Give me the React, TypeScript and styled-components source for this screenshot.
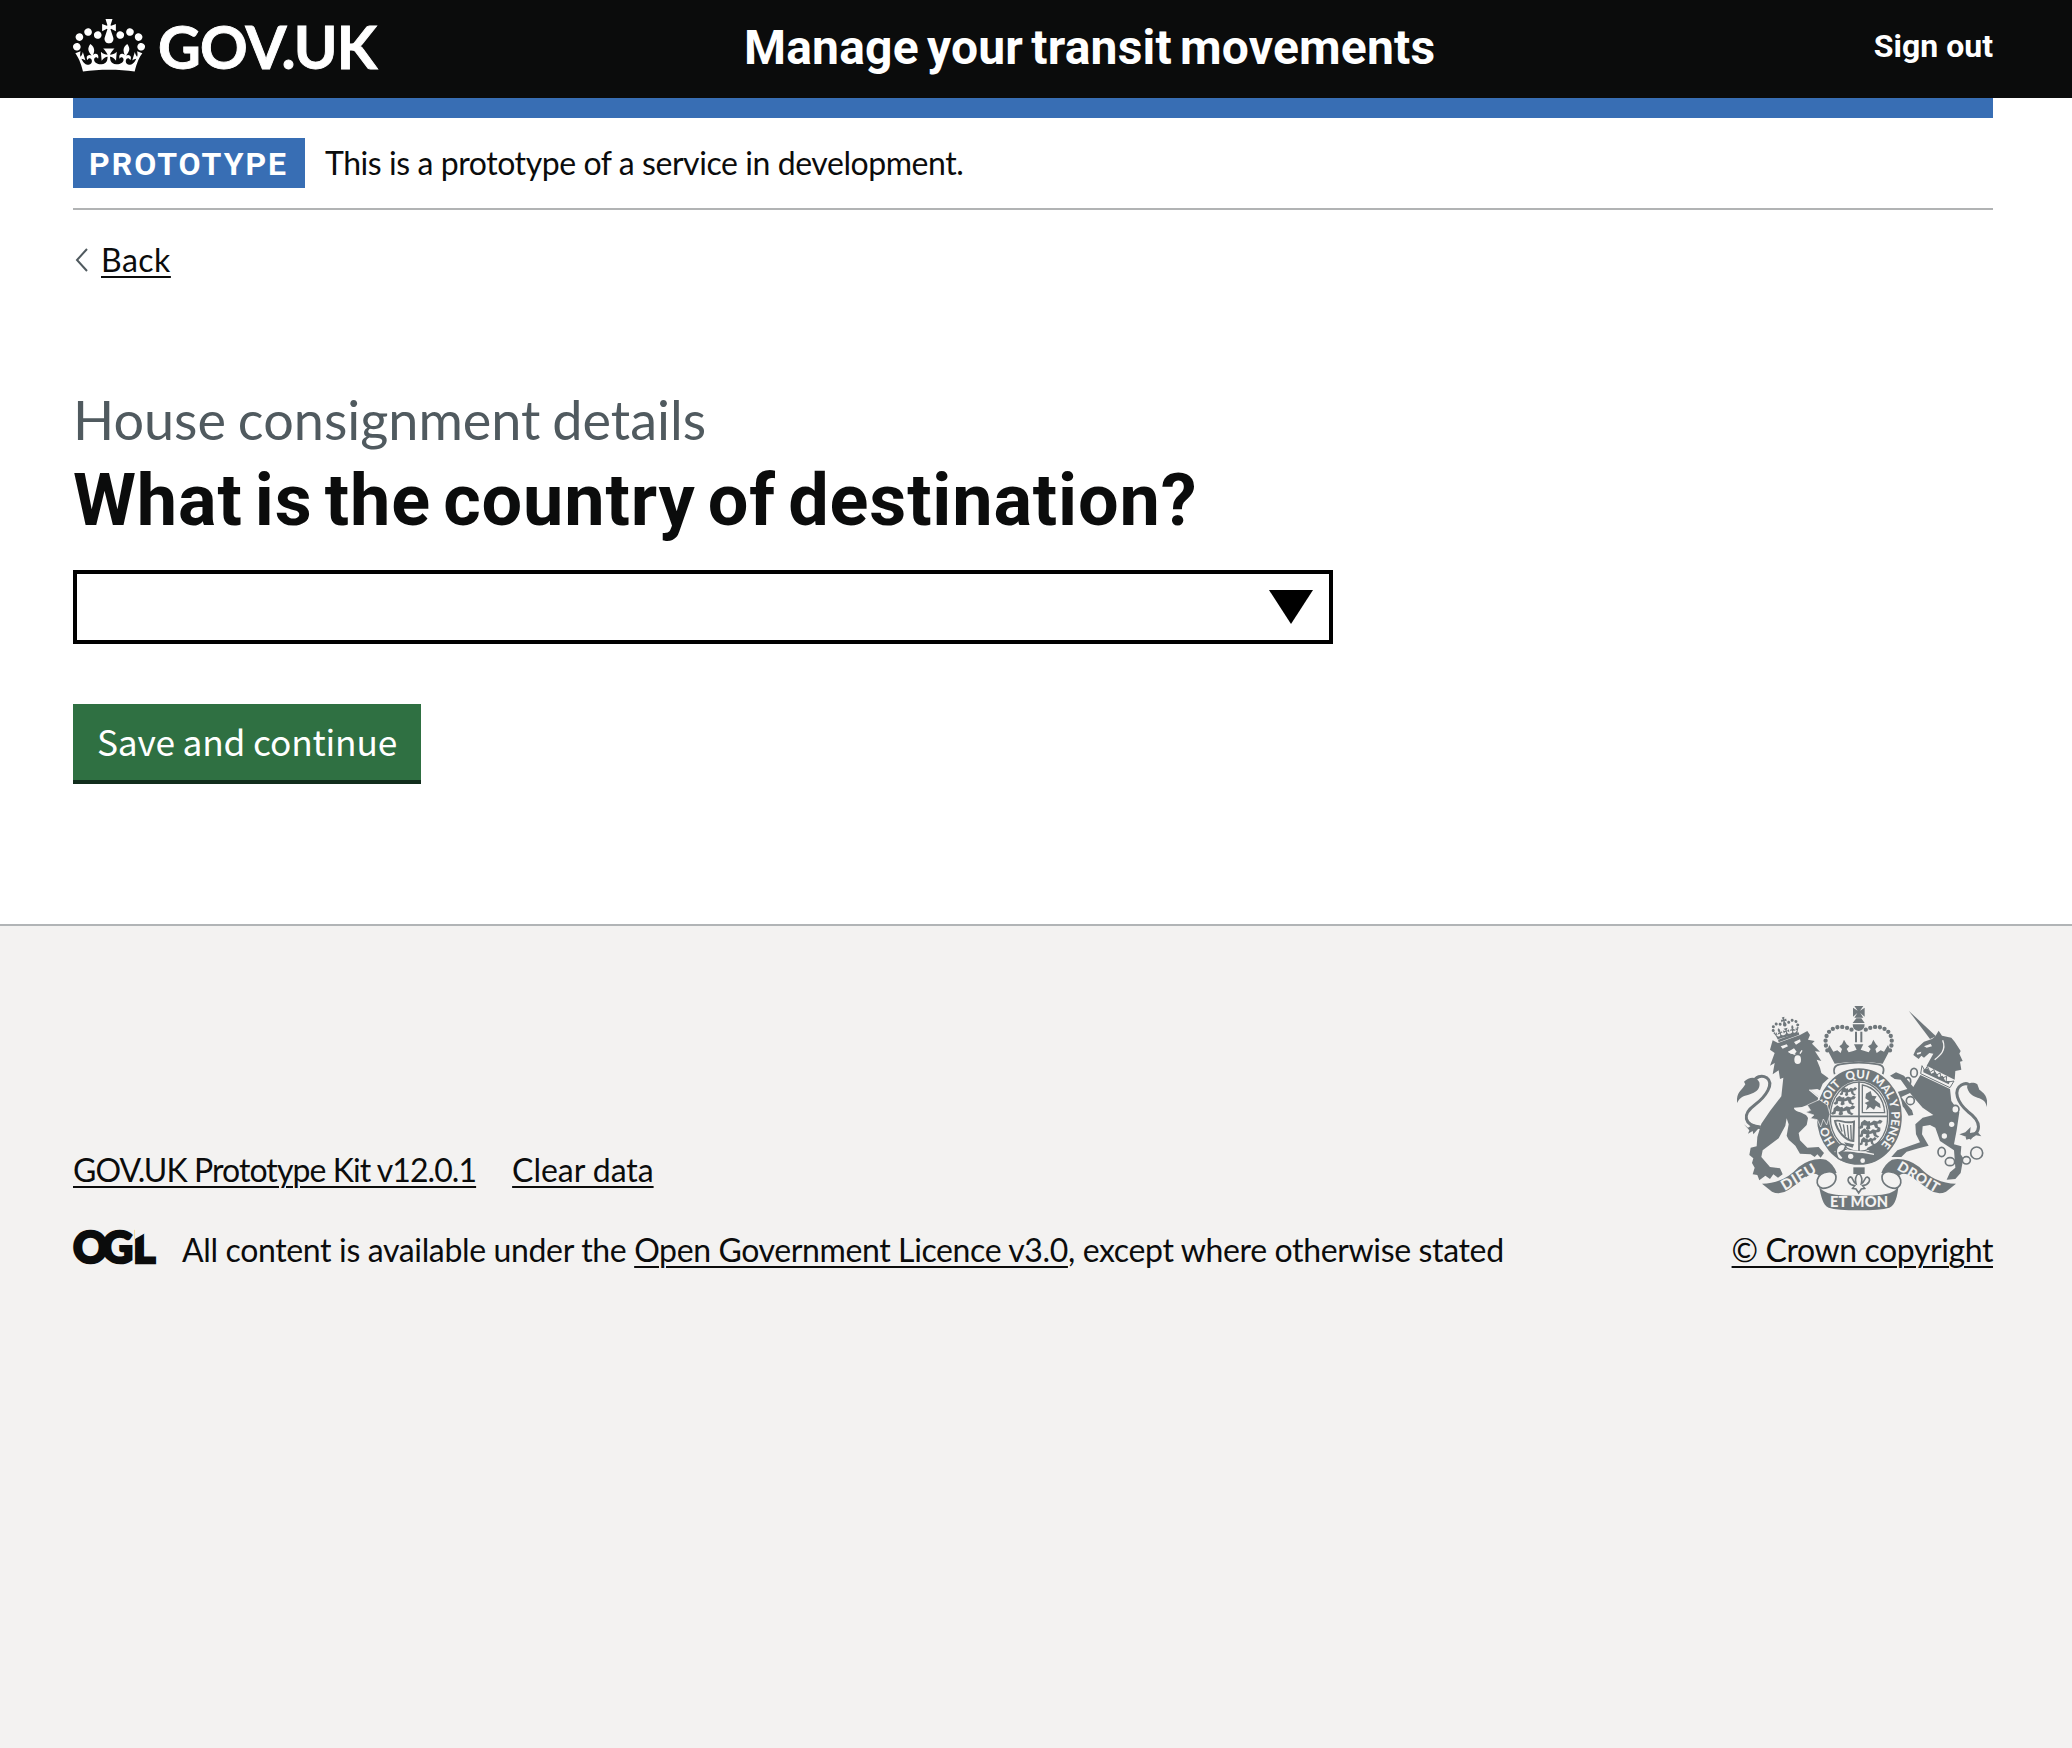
import React from "react";
import styled, { createGlobalStyle } from "styled-components";

const ink = "#0b0c0c";
const paper = "#f3f2f1";
const armsGrey = "#6f777b";
const light = 'Lato, "Noto Sans", sans-serif';
const bold = 'Roboto, "Noto Sans", sans-serif';

const GlobalStyle = createGlobalStyle`
  *, *::before, *::after { box-sizing: border-box; }
  html { background: ${paper}; }
  body { margin: 0; color: ${ink}; font-family: ${light}; font-size: 32px; line-height: 40px; }
`;

const Page = styled.div`
  display: flex;
  flex-direction: column;
  min-height: 1748px;
  background: #fff;
`;

const Container = styled.div`
  padding: 0 79px 0 73px;
`;

const Header = styled.header`
  height: 98px;
  padding: 0 79px 0 73px;
  background: ${ink};
  color: #fff;
  display: flex;
  align-items: flex-start;
`;

const LogoLink = styled.a`
  display: flex;
  align-items: flex-start;
  width: 671px;
  padding-top: 19px;
  color: #fff;
  text-decoration: none;
`;

const Crown = styled.svg`
  display: block;
  width: 72px;
  height: 53px;
  fill: #fff;
`;

const Wordmark = styled.span`
  margin: -2px 0 0 13px;
  font: 700 59px/60px ${light};
  letter-spacing: -0.8px;
  -webkit-text-stroke: 0.9px #fff;
`;

const ServiceName = styled.span`
  flex: 1;
  padding-top: 18px;
  font: 700 48px/60px ${bold};
  letter-spacing: 0.2px;
  word-spacing: -4px;
`;

const SignOut = styled.a`
  padding-top: 26px;
  font: 700 32px/40px ${bold};
  color: #fff;
  text-decoration: none;
`;

const BlueBar = styled.div`
  height: 20px;
  background: #386eb4;
`;

const PhaseBanner = styled.div`
  display: flex;
  align-items: center;
  gap: 20px;
  padding: 20px 0;
  border-bottom: 2px solid #b1b3b4;
`;

const Tag = styled.strong`
  width: 232px;
  height: 50px;
  padding: 1px 0 0 16px;
  background: #386eb4;
  color: #fff;
  font: 700 32px/50px ${bold};
  letter-spacing: 2px;
`;

const Text = styled.span<{ $track?: number }>`
  white-space: nowrap;
  letter-spacing: ${(p) => p.$track ?? -0.38}px;
`;

const PhaseText = styled(Text)`
  padding-bottom: 1px;
`;

const Link = styled.a<{ $track?: number }>`
  color: ${ink};
  white-space: nowrap;
  letter-spacing: ${(p) => p.$track ?? -0.38}px;
  text-decoration: underline;
  text-decoration-thickness: 2px;
  text-underline-offset: 4px;
`;

const BackRow = styled.nav`
  display: flex;
  align-items: center;
  gap: 13px;
  margin-top: 30px;
  padding-left: 2px;
`;

const Chevron = styled.svg`
  display: block;
  width: 13px;
  height: 24px;
  fill: none;
  stroke: #505a5f;
  stroke-width: 2;
`;

const Main = styled.main`
  padding: 110px 0 140px;
`;

const Caption = styled.span`
  display: block;
  margin-bottom: 11px;
  color: #505a5f;
  font: 400 54px/60px ${light};
  letter-spacing: 0;
  word-spacing: -2px;
`;

const Heading = styled.h1`
  margin: 0 0 29px;
  font: 700 72px/80px ${bold};
  letter-spacing: 0.85px;
  word-spacing: -6.5px;
`;

const Combo = styled.div`
  display: flex;
  align-items: flex-start;
  justify-content: flex-end;
  width: 1260px;
  height: 74px;
  padding: 16px 16px 0;
  border: 4px solid #000;
  background: #fff;
`;

const Arrow = styled.svg`
  display: block;
  width: 44px;
  height: 34px;
`;

const SaveButton = styled.button`
  display: block;
  width: 348px;
  height: 80px;
  margin-top: 60px;
  padding: 0 0 2px;
  border: 0;
  border-bottom: 4px solid #112d1c;
  background: #2f7042;
  color: #fff;
  font: 400 35.3px/70px "Noto Sans CJK JP", "Noto Sans", sans-serif;
  white-space: nowrap;
  letter-spacing: -0.2px;
`;

const Footer = styled.footer`
  flex: 1;
  display: flex;
  justify-content: space-between;
  align-items: flex-start;
  padding: 80px 79px 0 73px;
  border-top: 2px solid #b1b4b6;
  background: ${paper};
`;

const FooterMeta = styled.div`
  display: flex;
  flex-direction: column;
  gap: 40px;
  padding-top: 144px;
`;

const FooterLinks = styled.div`
  display: flex;
  gap: 36px;
`;

const Licence = styled.div`
  display: flex;
  align-items: flex-start;
  gap: 26px;
`;

const Ogl = styled.svg`
  display: block;
  width: 83px;
  height: 40px;
  overflow: visible;
`;

const Copyright = styled.div`
  display: flex;
  flex-direction: column;
  align-items: flex-end;
`;

const Arms = styled.svg`
  display: block;
  width: 250px;
  height: 205px;
  margin-right: 6px;
  margin-bottom: 19px;
`;

const crownPath =
  "M25 30.2c3.5 1.5 7.7-.2 9.1-3.7 1.5-3.6-.2-7.8-3.9-9.2-3.6-1.4-7.6.3-9.1 3.9-1.4 3.5.3 7.5 3.9 9zM9 39.5c3.6 1.5 7.8-.2 9.2-3.7 1.5-3.6-.2-7.8-3.9-9.1-3.6-1.5-7.6.2-9.1 3.8-1.4 3.5.3 7.5 3.8 9zM4.4 57.2c3.5 1.5 7.7-.2 9.1-3.8 1.5-3.6-.2-7.7-3.9-9.1-3.5-1.5-7.6.3-9.1 3.8-1.4 3.5.3 7.6 3.9 9.1zm38.3-21.4c3.5 1.5 7.7-.2 9.1-3.8 1.5-3.6-.2-7.7-3.9-9.1-3.6-1.5-7.6.3-9.1 3.8-1.3 3.6.4 7.7 3.9 9.1zm64.4-5.6c-3.6 1.5-7.8-.2-9.1-3.7-1.5-3.6.2-7.8 3.8-9.2 3.6-1.4 7.7.3 9.2 3.9 1.3 3.5-.4 7.5-3.9 9zm15.9 9.3c-3.6 1.5-7.7-.2-9.1-3.7-1.5-3.6.2-7.8 3.7-9.1 3.6-1.5 7.7.2 9.2 3.8 1.5 3.5-.3 7.5-3.8 9zm4.7 17.7c-3.6 1.5-7.8-.2-9.2-3.8-1.5-3.6.2-7.7 3.9-9.1 3.6-1.5 7.7.3 9.2 3.8 1.3 3.5-.4 7.6-3.9 9.1zM89.3 35.8c-3.6 1.5-7.8-.2-9.2-3.8-1.4-3.6.2-7.7 3.9-9.1 3.6-1.5 7.7.3 9.2 3.8 1.4 3.6-.3 7.7-3.9 9.1zM69.7 17.7l8.9 4.7V9.3l-8.9 2.8c-.2-.3-.5-.6-.9-.9L72.4 0H59.6l3.5 11.2c-.3.3-.6.5-.9.9l-8.8-2.8v13.1l8.8-4.7c.3.3.6.7.9.9l-5 15.4v.1c-.2.8-.4 1.6-.4 2.4 0 4.1 3.1 7.5 7 8.1h.2c.3 0 .7.1 1 .1.4 0 .7 0 1-.1h.2c4-.6 7.1-4.1 7.1-8.1 0-.8-.1-1.7-.4-2.4V34l-5.1-15.4c.4-.2.7-.6 1-.9zM66 92.8c16.9 0 32.8 1.1 47.1 3.2 4-16.9 8.9-26.7 14-33.5l-9.6-3.4c1 4.9 1.1 7.2 0 10.2-1.5-1.4-3-4.3-4.2-8.7L108.6 76c2.8-2 5-3.2 7.5-3.3-4.4 9.4-10 11.9-13.6 11.2-4.3-.8-6.3-4.6-5.6-7.9 1-4.7 5.7-5.9 8-.5 4.3-8.7-3-11.4-7.6-8.8 7.1-7.2 7.9-13.5 2.1-21.1-8 6.1-8.1 12.3-4.5 20.8-4.7-5.4-12.1-2.5-9.5 6.2 3.4-5.2 7.9-2 7.2 3.1-.6 4.3-6.4 7.8-13.5 7.2-10.3-.9-10.9-8-11.2-13.8 2.5-.5 7.1 1.8 11 7.3L80.2 60c-4.1 4.4-8 5.3-12.3 5.4 1.4-4.4 8-11.6 8-11.6H55.5s6.4 7.2 7.9 11.6c-4.2-.1-8-1-12.3-5.4l1.4 16.4c3.9-5.5 8.5-7.7 10.9-7.3-.3 5.8-.9 12.8-11.1 13.8-7.2.6-12.9-2.9-13.5-7.2-.7-5 3.8-8.3 7.1-3.1 2.7-8.7-4.6-11.6-9.4-6.2 3.7-8.5 3.6-14.7-4.6-20.8-5.8 7.6-5 13.9 2.2 21.1-4.7-2.6-11.9.1-7.7 8.8 2.3-5.5 7.1-4.2 8.1.5.7 3.3-1.3 7.1-5.7 7.9-3.5.7-9-1.8-13.5-11.2 2.5.1 4.7 1.3 7.5 3.3l-4.7-15.4c-1.2 4.4-2.7 7.2-4.3 8.7-1.1-3-.9-5.3 0-10.2l-9.5 3.4c5 6.9 9.9 16.7 14 33.5 14.8-2.1 30.8-3.2 47.7-3.2z";

/* Words of the garter motto, placed by their share of the ring's perimeter. */
const motto: [string, string][] = [
  ["HO", "16.5%"],
  ["SOIT", "35.3%"],
  ["QUI", "49.3%"],
  ["MAL", "61.5%"],
  ["Y", "69.5%"],
  ["PENSE", "80.8%"],
];

const smallLion =
  "M0 5l5-5 5 4 4-1 1 4 6-5 6 2 4-4 5 3-3 5-6 1 1 6 5 3-3 3-7-4-2-6-7 2 1 6-5 3-3-3 2-6-6-1-1 6-5 2-3-3 4-4 1-7z";

function RoyalArms() {
  return (
    <Arms viewBox="51 47 750 615" fill={armsGrey} aria-label="Royal coat of arms">
      <defs>
        <path id="garter" d="M417 494A97 115 0 0 1 417 264A97 115 0 0 1 417 494" />
      </defs>

      {/* lion */}
      <g>
        <g transform="translate(148 90) rotate(-13) scale(.64)">
          <path d={crownPath} />
        </g>
        <path d="M174 148L236 126L238 133L176 156Z" />
        <path d="M158 150L174 158L240 134L262 122L270 134L264 148L284 152L276 160L300 184L285 183L304 212L290 208L300 232L304 248L326 264L308 280L300 300L292 296L270 298L300 322L322 342L328 372L318 402L308 384L300 408L292 388L272 384L282 374L258 366L272 360L262 344L246 350L222 352C220 366 262 366 264 384L260 404L236 428L240 450L262 472L296 470L312 488L302 502L292 492L284 500L272 492L240 490L226 466L206 448L200 436L206 402L200 384L196 406L176 444L128 480L124 500L150 530L180 534L188 552L174 562L160 552L150 566L136 556L118 570L112 554L98 552L104 532L96 518L100 504L88 494L92 472L110 468L112 440L124 400L150 362L184 318L190 262L180 266L176 240L158 252L164 218L150 226L164 188L150 178Z" />
        <path d="M182 168L200 162L204 168L188 175ZM222 155L240 147L242 154L228 163ZM204 184L222 174L230 184L222 192L212 190Z" fill={paper} />
        <ellipse cx="233" cy="208" rx="10" ry="13" fill={paper} />
        <path d="M226 192L206 184M240 190L246 180M268 298L306 330" fill="none" stroke={paper} strokeWidth="4" />
        <path d="M122 412C70 404 66 372 104 344C138 318 164 280 140 262C124 252 106 260 100 276" fill="none" stroke={armsGrey} strokeWidth="9" />
        <path d="M51 338C48 306 66 300 76 282L72 274C90 256 112 260 118 276C122 296 108 306 90 312C72 318 62 318 51 338Z" />
        <path d="M72 402L84 412L100 402L124 406L112 418L100 432L98 422L84 430L88 420Z" />
      </g>

      {/* unicorn */}
      <g>
        <path d="M566 61L648 138L630 146Z" />
        <path d="M612 154L636 146L646 138L656 121L666 136L694 142L704 154L722 182L718 190L728 212L720 214L724 238L706 242L704 268L620 226L640 190L628 188L612 202L604 196L596 206L580 194L588 176Z" />
        <path d="M612 168L632 160L636 168L620 172ZM590 188L604 184L602 190L592 193Z" fill={paper} />
        <path d="M668 150C680 180 660 196 644 208" fill="none" stroke={paper} strokeWidth="4" />
        <path d="M606 226L614 240L622 228L630 246L642 238L646 256L660 248L664 264L680 258L678 276L702 272L690 292L602 250Z" fill={paper} stroke={armsGrey} strokeWidth="3" />
        <path d="M610 238L622 234L634 250L646 244L656 260L668 256L676 272L690 272L686 282L610 246Z" />
        <path d="M601 254L690 296L694 332L718 366L710 420L702 462L724 468L722 492L730 504L722 548L706 566L680 568L690 546L706 532L702 480L660 452L646 412L630 404L608 408L606 432L626 466L596 474L560 484L544 500L514 500L532 480L600 456L588 432L586 402L608 382L640 374L608 352L582 322L570 308L544 320L560 342L576 360L580 374L566 376L552 352L530 334L522 308L562 296L542 268L524 266L510 256L528 246L552 256L580 290Z" />
        <path d="M738 444C790 430 784 392 744 364C712 336 698 300 724 284C742 274 752 284 756 296" fill="none" stroke={armsGrey} strokeWidth="9" />
        <path d="M801 350C804 318 794 310 778 298L772 282C756 272 738 280 742 294C748 314 764 320 778 324C792 330 796 334 801 350Z" />
        <path d="M718 432L736 426L752 410L750 428L772 424L784 438L764 434L752 448L740 440Z" />
        <g fill="none" stroke={armsGrey} strokeWidth="5">
          <ellipse cx="582" cy="247" rx="10" ry="13" />
          <ellipse cx="564" cy="273" rx="8" ry="11" />
          <ellipse cx="571" cy="331" rx="12" ry="12" fill={paper} />
          <ellipse cx="706" cy="357" rx="11" ry="12" fill={paper} />
          <ellipse cx="665" cy="485" rx="11" ry="14" />
          <ellipse cx="690" cy="514" rx="14" ry="12" />
          <ellipse cx="739" cy="510" rx="12" ry="11" />
          <circle cx="770" cy="488" r="18" />
        </g>
        <g fill={paper}>
          <circle cx="695" cy="402" r="8" />
          <circle cx="673" cy="437" r="8" />
        </g>
      </g>

      {/* crown */}
      <g>
        <path d="M403 47H430L420 61L434 52V79L421 68L430 82H403L412 68L399 79V52L413 61Z" />
        <path d="M409 84H424L434 98H398ZM398 102H434Q434 120 416 122Q398 120 398 102Z" />
        <path d="M408 124V156M424 124V156" stroke={armsGrey} strokeWidth="6" fill="none" />
        <path d="M322 180C300 124 350 92 398 120M510 180C532 124 482 92 434 120" fill="none" stroke={armsGrey} strokeWidth="13" strokeLinecap="round" strokeDasharray="0 14.6" />
        <path d="M328 164L340 184L352 180L362 188L366 176L358 168L366 162L372 148L380 162L388 168L380 176L386 186L400 182L410 178L402 162H430L422 178L434 182L446 186L452 176L444 168L454 162L460 148L468 162L474 168L466 176L470 188L482 180L492 184L504 164L510 178L488 220Q416 208 344 220L322 178Z" />
        <path d="M344 252Q336 226 360 222Q416 212 474 222Q498 226 488 252" fill={paper} stroke={armsGrey} strokeWidth="5" />
      </g>

      {/* garter and shield */}
      <g>
        <path
          d="M417 231C490 231 548 298 548 378C548 462 490 526 417 526C344 526 288 462 288 378C288 298 344 231 417 231Z"
          stroke={paper}
          strokeWidth="5"
        />
        <ellipse cx="417" cy="379" rx="90" ry="108" fill={paper} />
        <ellipse cx="417" cy="379" rx="86" ry="104" fill="none" stroke={armsGrey} strokeWidth="4" />
        <path d="M417 274V484M330 378H504" stroke={armsGrey} strokeWidth="5" fill="none" />
        <path d={smallLion} transform="translate(366 290) scale(1.25)" />
        <path d={smallLion} transform="translate(350 316) scale(1.6 1.35)" />
        <path d={smallLion} transform="translate(343 345) scale(1.75 1.4)" />
        <path d={smallLion} transform="translate(425 388) scale(1.75 1.4)" />
        <path d={smallLion} transform="translate(425 414) scale(1.6 1.35)" />
        <path d={smallLion} transform="translate(425 440) scale(1.25)" />
        <path d="M427 284C462 290 492 322 494 367H427Z" fill="none" stroke={armsGrey} strokeWidth="4" />
        <path d="M438 310L452 302L456 316L470 318L464 328L480 340L482 354L468 346L462 358L450 350L438 360L442 344L434 338L448 332L436 324Z" />
        <path d="M345 392C362 386 372 402 402 394L400 452C376 450 352 424 345 392Z" fill="none" stroke={armsGrey} strokeWidth="6" />
        <path d="M358 398L366 424M370 402L376 438M382 404L386 446M392 404L394 448" stroke={armsGrey} strokeWidth="4" fill="none" />
        <path d="M372 456L402 462L398 472L380 466ZM440 474L496 444L488 476L462 492Z" />
        <path d="M344 484Q390 476 462 492" fill="none" stroke={paper} strokeWidth="4" />
        <circle cx="392" cy="498" r="8" fill={paper} />
        <circle cx="428" cy="511" r="7" fill={paper} />
        <path d="M378 466C356 452 342 476 352 500C356 510 368 510 370 502L358 488L372 480Z" fill={paper} stroke={armsGrey} strokeWidth="5" />
        <g fill={paper} fontFamily="Lato, sans-serif" fontWeight="900" fontSize="35" textAnchor="middle">
          {motto.map(([word, at]) => (
            <text key={word}>
              <textPath href="#garter" startOffset={at}>{word}</textPath>
            </text>
          ))}
        </g>
        <path d="M262 344L298 328L322 344L330 372L320 404L310 386L302 410L292 388L272 384L282 374L258 366L272 360Z" stroke={paper} strokeWidth="2" />
      </g>

      {/* ribbon */}
      <g>
        <path d="M126 580Q190 580 236 530Q276 500 318 508Q342 522 350 548L318 552Q310 556 304 566Q290 540 264 556L206 598Q180 616 156 604Z" />
        <path d="M708 580Q644 580 598 530Q558 500 516 508Q492 522 484 548L516 552Q524 556 530 566Q544 540 570 556L628 598Q654 616 678 604Z" />
        <path d="M292 568C300 540 348 536 348 560C348 580 330 594 308 594C294 590 290 580 292 568ZM542 568C534 540 486 536 486 560C486 580 504 594 526 594C540 590 544 580 542 568Z" fill={paper} stroke={armsGrey} strokeWidth="5" />
        <path d="M296 584C310 618 360 614 416 617C474 614 524 618 536 584C532 620 526 644 508 652Q480 660 416 660Q352 660 326 652C308 644 304 620 296 584Z" />
        <path d="M400 531H434V551H400Z" />
        <path d="M416 548C402 562 406 572 408 580C396 574 400 558 390 560C378 566 386 584 404 586L398 594L408 596L416 608L424 596L434 594L428 586C446 584 456 566 442 560C434 558 436 574 424 580C426 572 430 562 416 548Z" fill={paper} stroke={armsGrey} strokeWidth="5" />
        <g fill={paper} fontFamily="Lato, sans-serif" fontWeight="900" fontSize="44" textAnchor="middle">
          <text transform="translate(243 573) rotate(-31)" textLength="114">DIEU</text>
          <text x="417" y="651" textLength="174">ET MON</text>
          <text transform="translate(588 572) rotate(31)" textLength="138" fontSize="42">DROIT</text>
        </g>
      </g>
    </Arms>
  );
}

export default function App() {
  return (
    <>
      <GlobalStyle />
      <Page>
        <Header>
          <LogoLink>
            <Crown viewBox="0 0 132 97" aria-hidden="true">
              <path d={crownPath} />
            </Crown>
            <Wordmark>GOV.UK</Wordmark>
          </LogoLink>
          <ServiceName>Manage your transit movements</ServiceName>
          <SignOut>Sign out</SignOut>
        </Header>

        <Container>
          <BlueBar />
          <PhaseBanner>
            <Tag>PROTOTYPE</Tag>
            <PhaseText $track={-0.43}>This is a prototype of a service in development.</PhaseText>
          </PhaseBanner>
          <BackRow>
            <Chevron viewBox="0 0 13 24">
              <path d="M12 1L2 12L12 23" />
            </Chevron>
            <Link $track={0.5}>Back</Link>
          </BackRow>
          <Main>
            <Caption>House consignment details</Caption>
            <Heading>What is the country of destination?</Heading>
            <Combo>
              <Arrow viewBox="0 0 44 34">
                <path d="M0 0H44L22 34Z" />
              </Arrow>
            </Combo>
            <SaveButton>Save and continue</SaveButton>
          </Main>
        </Container>

        <Footer>
          <FooterMeta>
            <FooterLinks>
              <Link $track={-0.93}>GOV.UK Prototype Kit v12.0.1</Link>
              <Link $track={-0.04}>Clear data</Link>
            </FooterLinks>
            <Licence>
              <Ogl viewBox="0 0 83 40" fill={ink}>
                <text
                  x="0 29 60"
                  y="33"
                  fontFamily="Lato, sans-serif"
                  fontWeight="900"
                  fontSize="43"
                  stroke={ink}
                  strokeWidth="2.5"
                >
                  OGL
                </text>
                <path d="M62 -1H74V2L62 9Z" fill={paper} />
              </Ogl>
              <Text $track={-0.35}>
                All content is available under the <Link>Open Government Licence v3.0</Link>, except where
                otherwise stated
              </Text>
            </Licence>
          </FooterMeta>
          <Copyright>
            <RoyalArms />
            <Link $track={-0.41}>© Crown copyright</Link>
          </Copyright>
        </Footer>
      </Page>
    </>
  );
}
